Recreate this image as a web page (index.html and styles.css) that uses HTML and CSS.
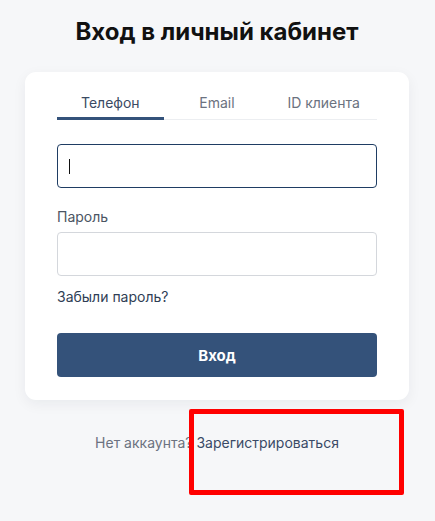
FILE: index.html
```html
<!DOCTYPE html>
<html lang="ru">
<head>
<meta charset="utf-8">
<title>Вход в личный кабинет</title>
<link rel="stylesheet" href="styles.css">
</head>
<body>
<main class="page">
  <h1 class="title">Вход в личный кабинет</h1>
  <section class="card">
    <nav class="tabs">
      <div class="tab active">Телефон</div>
      <div class="tab">Email</div>
      <div class="tab">ID клиента</div>
    </nav>
    <div class="field first">
      <div class="input focused"><span class="caret"></span></div>
    </div>
    <div class="field">
      <label class="label">Пароль</label>
      <div class="input"></div>
    </div>
    <a class="forgot">Забыли пароль?</a>
    <button class="btn">Вход</button>
  </section>
  <p class="footer">Нет аккаунта? <a class="register">Зарегистрироваться</a></p>
</main>
<div class="highlight"></div>
</body>
</html>
```
FILE: styles.css
```css
* { box-sizing: border-box; }
html, body { margin: 0; padding: 0; }
body {
  background: #f6f7f9;
  font-family: Inter, "Noto Sans", "Liberation Sans", sans-serif;
  width: 435px;
  height: 521px;
  overflow: hidden;
  position: relative;
}
.page {
  width: 384px;
  margin-left: 25px;
  padding-top: 18px;
}
.title {
  margin: 0;
  text-align: center;
  font-size: 24px;
  line-height: 28px;
  font-weight: 700;
  color: #111111;
}
.card {
  margin-top: 26px;
  background: #ffffff;
  border-radius: 11px;
  box-shadow: 0 4px 14px rgba(20, 30, 50, 0.06);
  padding: 19px 32px 23px;
  display: flex;
  flex-direction: column;
}
.tabs {
  display: grid;
  grid-template-columns: 1fr 1fr 1fr;
  border-bottom: 1px solid #eceef1;
}
.tab {
  text-align: center;
  font-size: 14px;
  line-height: 20px;
  color: #6b7280;
  padding: 2px 0 4px;
  border-bottom: 3px solid transparent;
  margin-bottom: -1px;
}
.tab.active {
  color: #3a4a63;
  border-bottom-color: #34527a;
}
.field { display: flex; flex-direction: column; }
.field.first { margin-top: 24px; }
.label {
  margin-top: 19px;
  font-size: 14px;
  line-height: 20px;
  color: #4b5563;
  margin-bottom: 5px;
}
.input {
  height: 44px;
  border: 1px solid #d4d7dc;
  border-radius: 4px;
  background: #fff;
  display: flex;
  align-items: center;
  padding-left: 11px;
}
.input.focused { border-color: #1f3d63; }
.caret {
  width: 1px;
  height: 15px;
  background: #111;
}
.forgot {
  margin-top: 11px;
  font-size: 14px;
  line-height: 20px;
  color: #2f3e55;
  align-self: flex-start;
}
.btn {
  margin-top: 26px;
  height: 44px;
  border: none;
  border-radius: 4px;
  background: #34527a;
  color: #ffffff;
  font-family: inherit;
  font-size: 15px;
  font-weight: 700;
}
.footer {
  margin: 33px 0 0;
  text-align: center;
  font-size: 14px;
  line-height: 20px;
  color: #6b7280;
}
.register { color: #3a4a66; }
.highlight {
  position: absolute;
  left: 189px;
  top: 409px;
  width: 215px;
  height: 86px;
  border: 5px solid #ff0000;
  border-radius: 2px;
}
```
